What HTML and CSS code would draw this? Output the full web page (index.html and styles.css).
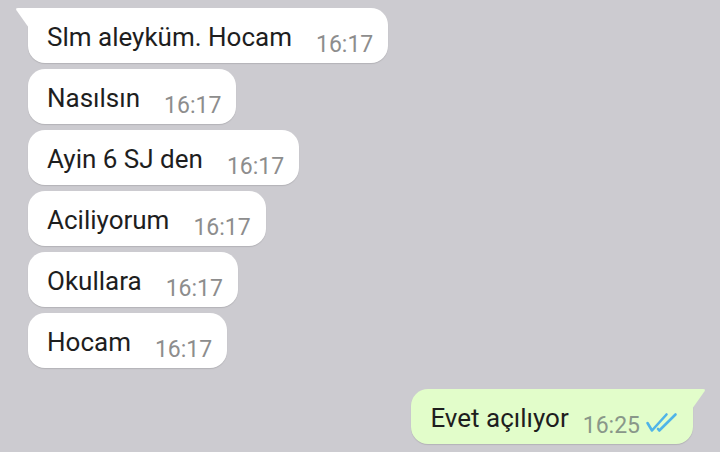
FILE: index.html
```html
<!DOCTYPE html>
<html lang="tr">
<head>
    <meta charset="UTF-8">
    <meta name="viewport" content="width=device-width, initial-scale=1.0">
    <title>Sohbet</title>
    <link rel="stylesheet" href="styles.css">
</head>
<body>
    <div class="chat">
        <div class="msg in first">
            <svg class="tail" width="14" height="20" viewBox="0 0 14 20"><path d="M14 0 H3 Q0 0 1.6 2.4 L14 20 Z"/></svg>
            <span class="text">Slm aleyküm. Hocam</span>
            <span class="time">16:17</span>
        </div>
        <div class="msg in">
            <span class="text">Nasılsın</span>
            <span class="time">16:17</span>
        </div>
        <div class="msg in">
            <span class="text">Ayin 6 SJ den</span>
            <span class="time">16:17</span>
        </div>
        <div class="msg in">
            <span class="text">Aciliyorum</span>
            <span class="time">16:17</span>
        </div>
        <div class="msg in">
            <span class="text">Okullara</span>
            <span class="time">16:17</span>
        </div>
        <div class="msg in">
            <span class="text">Hocam</span>
            <span class="time">16:17</span>
        </div>
        <div class="msg out">
            <svg class="tail" width="14" height="20" viewBox="0 0 14 20"><path d="M0 0 H11 Q14 0 12.4 2.4 L0 20 Z"/></svg>
            <span class="text">Evet açılıyor</span>
            <span class="time">16:25</span>
            <svg class="ticks" width="33" height="21" viewBox="0 0 33 21"><path d="M2.5 11 L7 18.5 L21.5 2.5"/><path d="M13 17 L14.3 18.5 L30.5 2.5"/></svg>
        </div>
    </div>
</body>
</html>
```

FILE: styles.css
```css
body {
    margin: 0;
    height: 452px;
    overflow: hidden;
    background-color: #cccbd0;
    font-family: Roboto, "Noto Sans", sans-serif;
}
.chat {
    display: flex;
    flex-direction: column;
    align-items: flex-start;
    gap: 6px;
    padding: 8px 0 0 28px;
}
.msg {
    position: relative;
    display: flex;
    align-items: flex-start;
    height: 55px;
    box-sizing: border-box;
    padding: 14px 15px 0 19px;
    border-radius: 17px;
    background-color: #ffffff;
    box-shadow: 0 1px 1px rgba(0, 0, 0, 0.12);
}
.text {
    font-size: 26px;
    line-height: 30px;
    color: #1e1e1e;
}
.time {
    margin: 9px 0 0 24px;
    font-size: 23px;
    line-height: 27px;
    color: #8d8d8d;
}
.first {
    border-top-left-radius: 0;
}
.tail {
    position: absolute;
    top: 0;
    fill: #ffffff;
}
.first .tail {
    left: -13px;
}
.out {
    align-self: flex-end;
    margin: 15px 27px 0 0;
    padding-right: 15px;
    background-color: #e2fdca;
    border-top-right-radius: 0;
}
.out .tail {
    right: -13px;
    fill: #e2fdca;
}
.out .time {
    margin-left: 14px;
    color: #899789;
}
.ticks {
    margin: 9px 0 0 5px;
    fill: none;
    stroke: #4fb4e8;
    stroke-width: 2.6;
    stroke-linecap: round;
    stroke-linejoin: round;
}
```
